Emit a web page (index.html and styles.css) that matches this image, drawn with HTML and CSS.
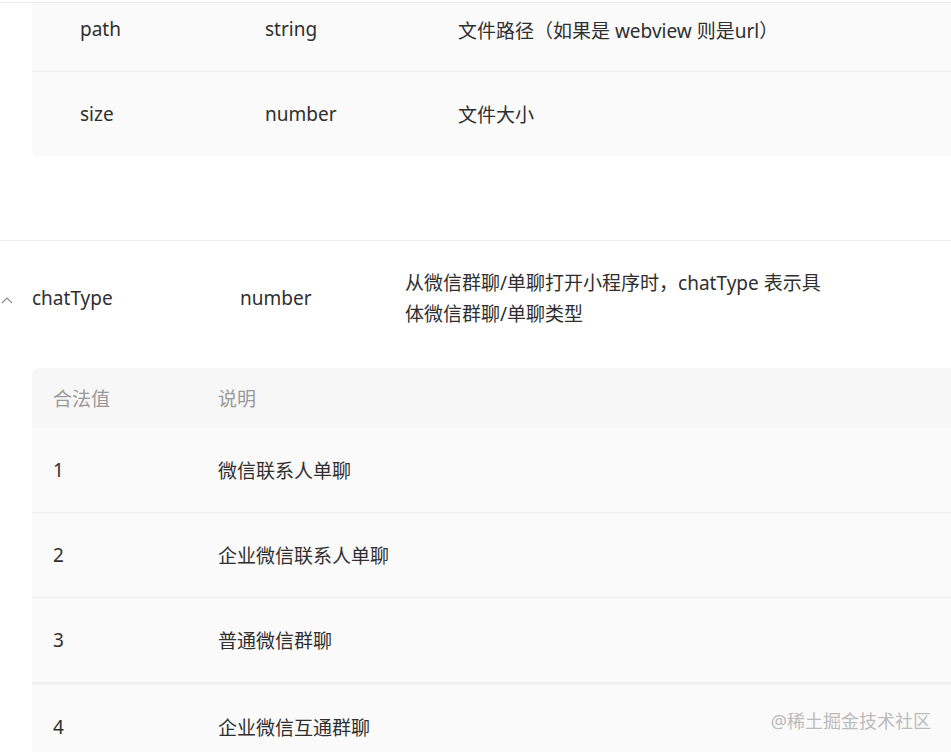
FILE: index.html
```html
<!DOCTYPE html>
<html lang="zh">
<head>
<meta charset="utf-8">
<title>chatType</title>
<link rel="stylesheet" href="styles.css">
</head>
<body>
<div class="page">
  <div class="sub-table top-table">
    <div class="row first">
      <div class="c1">path</div>
      <div class="c2">string</div>
      <div class="c3">文件路径（如果是 webview 则是url）</div>
    </div>
    <div class="row">
      <div class="c1">size</div>
      <div class="c2">number</div>
      <div class="c3">文件大小</div>
    </div>
  </div>

  <div class="param">
    <div class="param-row">
      <span class="chev"><svg width="12" height="8" viewBox="0 0 12 8"><path d="M1 7 L6 2 L11 7" fill="none" stroke="#888" stroke-width="1.1"/></svg></span>
      <div class="p-name">chatType</div>
      <div class="p-type">number</div>
      <div class="p-desc">从微信群聊/单聊打开小程序时，chatType 表示具体微信群聊/单聊类型</div>
    </div>

    <div class="enum">
      <div class="enum-head">
        <div class="e1">合法值</div>
        <div class="e2">说明</div>
      </div>
      <div class="enum-row">
        <div class="e1">1</div>
        <div class="e2">微信联系人单聊</div>
      </div>
      <div class="enum-row">
        <div class="e1">2</div>
        <div class="e2">企业微信联系人单聊</div>
      </div>
      <div class="enum-row thick">
        <div class="e1">3</div>
        <div class="e2">普通微信群聊</div>
      </div>
      <div class="enum-row">
        <div class="e1">4</div>
        <div class="e2">企业微信互通群聊</div>
      </div>
    </div>
  </div>
  <div class="watermark">@稀土掘金技术社区</div>
</div>
</body>
</html>
```

FILE: styles.css
```css
html, body {
  margin: 0;
  padding: 0;
  background: #fff;
}
body {
  font-family: "Noto Sans", "Noto Sans CJK SC", sans-serif;
  font-size: 19px;
  color: #2f2f2f;
  overflow: hidden;
  height: 752px;
}
.page {
  position: relative;
  width: 951px;
  height: 752px;
  overflow: hidden;
}
.top-table {
  margin-top: 2px;
  border-top: 1px solid #ececec;
}
.top-table .row {
  margin-left: 32px;
  background: #fafafa;
  display: flex;
  align-items: center;
  height: 84px;
  border-top: 1px solid #efefef;
}
.top-table .row.first {
  height: 68px;
  border-top: none;
  align-items: flex-start;
  padding-top: 13px;
  box-sizing: border-box;
}
.top-table .row:last-child {
  border-bottom-left-radius: 6px;
}
.c1 { margin-left: 48px; width: 185px; }
.c2 { width: 193px; }
.c3 { flex: 1; }

.param {
  margin-top: 84px;
  border-top: 1px solid #ececec;
}
.param-row {
  display: flex;
  align-items: center;
  height: 114px;
}
.chev {
  width: 32px;
  display: flex;
  align-items: center;
  padding-left: 1px;
  box-sizing: border-box;
  margin-top: 3px;
}
.p-name { width: 208px; }
.p-type { width: 165px; }
.p-desc {
  width: 422px;
  line-height: 31px;
  margin-top: 2px;
}
.enum {
  margin-left: 32px;
  margin-top: 13px;
}
.enum-head {
  display: flex;
  align-items: center;
  height: 60px;
  background: #f7f7f7;
  border-top-left-radius: 7px;
  color: #999;
}
.e1 { width: 165px; padding-left: 21px; }
.e2 { flex: 1; }
.enum-row {
  display: flex;
  align-items: center;
  height: 84px;
  background: #fafafa;
  border-bottom: 1px solid #efefef;
}
.enum-row.thick {
  border-bottom: 3px solid #f0f0f0;
}
.watermark {
  position: absolute;
  right: 20px;
  top: 707px;
  font-size: 18px;
  color: #bbb;
}
```
